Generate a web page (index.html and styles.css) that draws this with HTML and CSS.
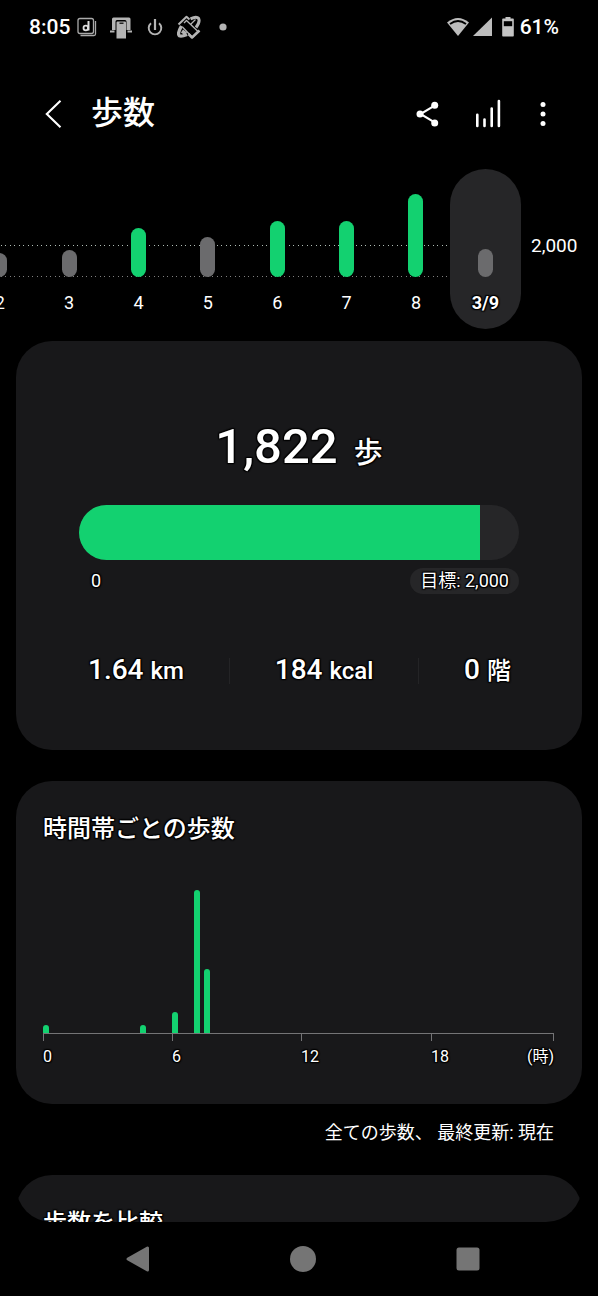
FILE: index.html
```html
<!DOCTYPE html>
<html lang="ja">
<head>
<meta charset="utf-8">
<meta name="viewport" content="width=device-width, initial-scale=1">
<title>歩数</title>
<link rel="stylesheet" href="styles.css">
</head>
<body>
<div class="status">
  <span>8:05</span>
  <div class="notices">
    <svg viewBox="0 0 24 24" width="24" height="24" aria-hidden="true"><g fill="none" stroke="#aaa" stroke-width="1.3"><rect x="3" y="3.500" width="15.500" height="15" rx="2"/><path d="M20.500 6v13q0 1.500-1.500 1.500H5.500"/><path d="M13.500 6v9.500" stroke="#ddd" stroke-width="2"/><circle cx="10.800" cy="13" r="2.300" stroke="#ddd" stroke-width="1.800"/></g></svg>
    <svg viewBox="0 0 24 24" width="24" height="24" aria-hidden="true"><g fill="#b4b4b4"><path d="M3 4q0-1.500 1.500-1.500h15.500q1.500 0 1.500 1.500v11h-4V6.500q0-1.500-1.500-1.500H8Q6.500 5 6.500 6.500V15H3z"/><path d="M1 15.500h4.500v2H1zM18.500 15.500H23v2h-4.500zM8.500 6.500h7.500q1 0 1 1v16H7.500v-16q0-1 1-1z"/></g><path d="M10.500 8.200h4" stroke="#000" stroke-width="1.200"/></svg>
    <svg viewBox="0 0 24 24" width="24" height="24" aria-hidden="true"><g fill="none" stroke="#b4b4b4"><path d="M8 8.200a6.300 6.300 0 1 0 8 0" stroke-width="1.900"/><path d="M12 4v11" stroke-width="2.200"/></g></svg>
    <svg viewBox="0 0 24 24" width="24" height="24" aria-hidden="true"><g fill="none" stroke="#b4b4b4" stroke-linejoin="round"><path d="M1.500 9.500 9.500 1.800l3 2.700" stroke-width="2"/><path d="M7 8 9.500 5.500 21 16.500l-5.500 6L5.500 12" stroke-width="1.300"/><path d="M13.500 3.800q6-3 8-.5 2 3-2.500 9.200" stroke-width="3"/><path d="M18.500 4.500 13.500 9.500" stroke-width="1.300"/><path d="M4.500 11q-4.500 8-2 9.800 2 1 7.500-1.300M5 16l4 3" stroke-width="3.500"/><path d="M11.500 19 15 22.500l7.500-7" stroke-width="2.500"/></g></svg>
    <svg viewBox="0 0 24 24" width="24" height="24" aria-hidden="true"><circle cx="12" cy="12" r="3.600" fill="#b4b4b4"/></svg>
  </div>
  <div class="signals">
    <svg viewBox="0 0 22 20" width="22" height="20" aria-hidden="true"><path d="M0 5.500Q11-3.500 22 5.500L11 19z" fill="#bdbdbd"/><path d="M3 7Q11 1 19 7" fill="none" stroke="#000" stroke-width="1.800"/></svg>
    <svg viewBox="0 0 20 20" width="20" height="20" aria-hidden="true"><path d="M0 19 19 .5V19z" fill="#bdbdbd"/></svg>
    <svg class="battery" viewBox="0 0 12 20" width="12" height="20" aria-hidden="true"><path d="M3.500 0h5v1.500H11q.8 0 .8.800v16.400q0 .8-.8.800H1q-.8 0-.8-.8V2.300q0-.8.800-.8h2.500z" fill="#c4c4c4"/><path d="M1.800 4.200h8.400v5H1.800z" fill="#000"/></svg>
    <span>61%</span>
  </div>
</div>

<header class="appbar">
  <button class="icon-button" type="button" aria-label="戻る"><svg viewBox="0 0 32 32" width="32" height="32"><path d="M22.500 2.700 8.800 16l13.700 13.300" fill="none" stroke="#fff" stroke-width="2.100"/></svg></button>
  <h1>歩数</h1>
  <div class="actions">
    <button class="icon-button" type="button" aria-label="共有"><svg viewBox="0 0 32 32" width="32" height="32"><g fill="#fff"><path d="M24 7.300 9.500 16 24 24.700" fill="none" stroke="#fff" stroke-width="2.100"/><circle cx="9" cy="16" r="3.500"/><circle cx="23.700" cy="7.300" r="3.500"/><circle cx="23.700" cy="25" r="3.500"/></g></svg></button>
    <button class="icon-button" type="button" aria-label="統計"><svg viewBox="0 0 32 32" width="32" height="32"><path d="M5.300 16.700v11.300M12.500 21.500v6.500M19.700 10.500v17.500M26.900 3v25" stroke="#fff" stroke-width="2.600" stroke-linecap="round"/></svg></button>
    <button class="icon-button more" type="button" aria-label="その他"><svg viewBox="6 0 20 32" width="20" height="32"><g fill="#fff"><circle cx="16" cy="6.500" r="2.500"/><circle cx="16" cy="16" r="2.500"/><circle cx="16" cy="25.500" r="2.500"/></g></svg></button>
  </div>
</header>

<main>
  <section class="week" aria-label="日別の歩数">
    <div class="days">
      <button class="day" type="button"><i class="bar" style="height:24px"></i>2</button>
      <button class="day" type="button"><i class="bar" style="height:27px"></i>3</button>
      <button class="day" type="button"><i class="bar reached" style="height:49px"></i>4</button>
      <button class="day" type="button"><i class="bar" style="height:40px"></i>5</button>
      <button class="day" type="button"><i class="bar reached" style="height:56px"></i>6</button>
      <button class="day" type="button"><i class="bar reached" style="height:56px"></i>7</button>
      <button class="day" type="button"><i class="bar reached" style="height:83px"></i>8</button>
      <button class="day selected" type="button"><i class="bar" style="height:28px"></i>3/9</button>
    </div>
    <span class="goal-line">2,000</span>
  </section>

  <section class="card today">
    <p class="total">1,822 <span>歩</span></p>
    <div class="progress" role="progressbar" aria-label="目標" aria-valuemin="0" aria-valuemax="2000" aria-valuenow="1822"><div class="fill" style="width:91.1%"></div></div>
    <div class="range"><span>0</span><span class="goal">目標: 2,000</span></div>
    <ul class="stats">
      <li>1.64 <small>km</small></li>
      <li class="rule"></li>
      <li>184 <small>kcal</small></li>
      <li class="rule"></li>
      <li>0 <small>階</small></li>
    </ul>
  </section>

  <section class="card hourly">
    <h2>時間帯ごとの歩数</h2>
    <div class="plot">
      <i style="grid-column:1;height:8px"></i>
      <i style="grid-column:10;height:8px"></i>
      <i style="grid-column:13;height:21px"></i>
      <i style="grid-column:15;height:143px"></i>
      <i style="grid-column:16;height:64px"></i>
    </div>
    <div class="axis"><span>0</span><span>6</span><span>12</span><span>18</span><span class="unit">(時)</span></div>
  </section>

  <p class="note">全ての歩数、 最終更新: 現在</p>

  <div class="peek">
    <section class="card compare"><h2>歩数を比較</h2></section>
  </div>
</main>

<nav class="system" aria-label="システム">
  <button class="icon-button" type="button" aria-label="戻る"><svg viewBox="0 0 32 32" width="32" height="32"><path d="M6 16 25.500 5v22z" fill="#757575" stroke="#757575" stroke-width="3" stroke-linejoin="round"/></svg></button>
  <button class="icon-button" type="button" aria-label="ホーム"><svg viewBox="0 0 32 32" width="32" height="32"><circle cx="16" cy="16" r="13" fill="#757575"/></svg></button>
  <button class="icon-button" type="button" aria-label="履歴"><svg viewBox="0 0 32 32" width="32" height="32"><rect x="4.500" y="4.500" width="23" height="23" rx="2.500" fill="#757575"/></svg></button>
</nav>
</body>
</html>
```
FILE: styles.css
```css
* { box-sizing: border-box; }

body {
  margin: 0;
  height: 100vh;
  display: flex;
  flex-direction: column;
  overflow-x: hidden;
  background: #000;
  color: #fff;
  font-family: Roboto, "Noto Sans CJK JP", sans-serif;
  font-size: 18px;
}

h1, h2, p, ul { margin: 0; padding: 0; }

button {
  padding: 0;
  border: 0;
  background: none;
  color: inherit;
  font: inherit;
}

svg { display: block; }

.status {
  flex: none;
  display: flex;
  align-items: center;
  height: 54px;
  padding: 0 39px 0 29px;
  font-size: 21px;
  font-weight: 500;
}

.notices { display: flex; gap: 10px; margin-left: 5px; }

.signals {
  display: flex;
  align-items: center;
  gap: 4px;
  margin-left: auto;
}

.battery { margin: 0 2px 0 5px; }

.appbar {
  flex: none;
  display: flex;
  align-items: center;
  height: 115px;
  padding: 5px 45px 0 38px;
}

.icon-button { display: grid; place-items: center; width: 32px; height: 32px; }

.more { width: 20px; }

h1 {
  margin-left: 21px;
  font-size: 32px;
  line-height: 46px;
  padding-bottom: 2px;
  font-weight: 500;
}

.actions { display: flex; gap: 29px; margin-left: auto; }

main { flex: 1; min-height: 0; display: flex; flex-direction: column; }

.week {
  flex: none;
  display: grid;
  grid-template-columns: 1fr 78px;
  overflow: hidden;
  font-size: 18px;
}

.days {
  display: grid;
  grid-template-columns: repeat(8, 1fr);
  height: 160px;
  margin-left: -35px;
  background:
    linear-gradient(90deg, #b0beb6 1px, transparent 1px 4px, #b0beb6 4px 5px, transparent 5px) 0 76px / 9px 1px repeat-x,
    linear-gradient(90deg, #808080 1px, transparent 1px 4px, #808080 4px 5px, transparent 5px) 0 107px / 9px 1px repeat-x;
}

.day {
  display: flex;
  flex-direction: column;
  align-items: center;
  justify-content: flex-end;
  gap: 16px;
  padding-bottom: 16px;
  line-height: 20px;
}

.bar {
  width: 15px;
  border-radius: 8px;
  background: #6b6b6d;
}

.reached { background: #13d170; }

.selected {
  margin: 0 -1px;
  border-radius: 36px;
  background: #262628;
  font-weight: 700;
}

.selected,
.card {
  text-shadow: -1px -1px 1px #000, 1px -1px 1px #000, -1px 1px 1px #000, 1px 1px 1px #000, 0 0 2px #000;
}

.goal-line { padding: 65px 0 0 11px; font-size: 19px; line-height: 24px; }

.card {
  flex: none;
  margin: 0 16px;
  border-radius: 36px;
  background: #18181a;
}

.today { margin-top: 12px; padding: 72px 63px 61px; }

.total {
  display: flex;
  align-items: baseline;
  justify-content: center;
  gap: 16px;
  font-size: 49px;
  line-height: 68px;
  font-weight: 500;
}

.total span { font-size: 29px; }

.progress {
  height: 55px;
  margin-top: 18px;
  border-radius: 28px;
  overflow: hidden;
  background: #262628;
}

.fill { height: 100%; background: #13d170; }

.range {
  display: flex;
  justify-content: space-between;
  margin-top: 8px;
  padding-left: 12px;
  line-height: 26px;
}

.goal { padding: 0 10px; border-radius: 13px; background: #262628; }

.stats {
  display: flex;
  align-items: center;
  justify-content: space-between;
  margin-top: 58px;
  padding: 0 8px 0 9px;
  list-style: none;
  font-size: 28px;
  line-height: 36px;
  font-weight: 500;
}

.stats small { font-size: 24px; }

.rule { width: 1px; height: 26px; background: #242426; }

.hourly { margin-top: 31px; padding: 30px 28px 35px 27px; }

h2 { font-size: 24px; line-height: 36px; font-weight: 500; }

.plot {
  display: grid;
  grid-template-columns: repeat(48, 1fr);
  align-items: end;
  height: 186px;
  margin-right: -5px;
}

.plot i {
  width: 6px;
  border-radius: 3px 3px 0 0;
  background: #13d170;
}

.axis {
  display: grid;
  grid-template-columns: 129fr 129fr 130fr 83fr 40fr;
  border-top: 1px solid #747476;
  font-size: 16px;
  line-height: 24px;
  background: linear-gradient(#747476, #747476) 100% 0 / 1px 7px no-repeat;
}

.axis span {
  padding-top: 11px;
  background: linear-gradient(#747476, #747476) 0 0 / 1px 7px no-repeat;
}

.axis .unit { background: none; text-align: right; white-space: nowrap; }

.note {
  flex: none;
  margin-top: 16px;
  padding: 0 44px;
  text-align: right;
  line-height: 26px;
}

.peek {
  flex: 1;
  min-height: 47px;
  margin: 29px 16px 0;
  border-radius: 0 0 36px 36px;
  overflow: hidden;
}

.compare { margin: 0; padding: 30px 27px; }

.system {
  flex: none;
  display: flex;
  align-items: center;
  justify-content: space-around;
  height: 74px;
  padding: 0 48px 0 55px;
}
```
